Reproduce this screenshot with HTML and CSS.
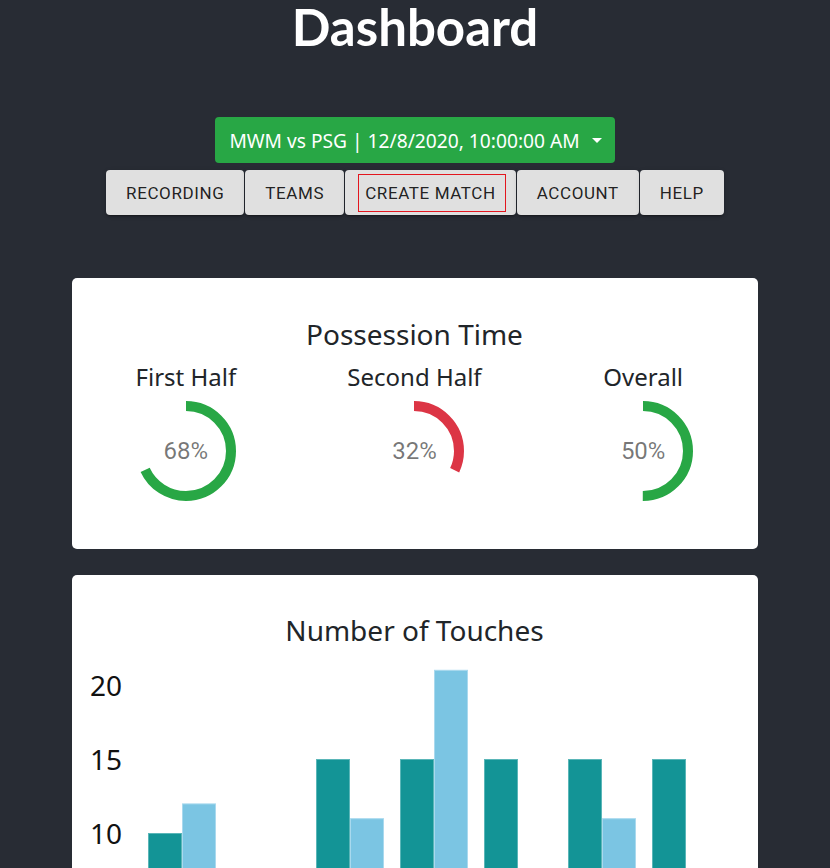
FILE: index.html
```html
<!DOCTYPE html>
<html lang="en">
<head>
<meta charset="utf-8">
<title>Dashboard</title>
<link rel="stylesheet" href="styles.css">
</head>
<body>
<div class="app">
  <h1 class="title">Dashboard</h1>

  <div class="match-select">
    <button class="match-btn"><span class="match-text">MWM vs PSG | 12/8/2020, 10:00:00 AM</span><span class="caret"></span></button>
  </div>

  <nav class="nav">
    <button class="nav-btn">RECORDING</button>
    <button class="nav-btn">TEAMS</button>
    <button class="nav-btn nav-btn-focus"><span class="focus-ring">CREATE MATCH</span></button>
    <button class="nav-btn">ACCOUNT</button>
    <button class="nav-btn">HELP</button>
  </nav>

  <section class="card card-possession">
    <h2 class="card-title">Possession Time</h2>
    <div class="gauges">
      <div class="gauge">
        <h3 class="gauge-label">First Half</h3>
        <div class="ring">
          <svg class="ring-svg" width="100" height="100" viewBox="0 0 100 100">
            <circle class="ring-arc ring-green" cx="50" cy="50" r="45" stroke-dasharray="192.26 400"/>
          </svg>
          <span class="ring-pct">68%</span>
        </div>
      </div>
      <div class="gauge">
        <h3 class="gauge-label">Second Half</h3>
        <div class="ring">
          <svg class="ring-svg" width="100" height="100" viewBox="0 0 100 100">
            <circle class="ring-arc ring-red" cx="50" cy="50" r="45" stroke-dasharray="90.48 400"/>
          </svg>
          <span class="ring-pct">32%</span>
        </div>
      </div>
      <div class="gauge">
        <h3 class="gauge-label">Overall</h3>
        <div class="ring">
          <svg class="ring-svg" width="100" height="100" viewBox="0 0 100 100">
            <circle class="ring-arc ring-green" cx="50" cy="50" r="45" stroke-dasharray="141.37 400"/>
          </svg>
          <span class="ring-pct">50%</span>
        </div>
      </div>
    </div>
  </section>

  <section class="card card-touches">
    <h2 class="card-title">Number of Touches</h2>
    <svg class="chart" width="686" height="380" viewBox="0 0 686 380">
      <g class="axis-labels">
        <text x="50" y="38">20</text>
        <text x="50" y="112">15</text>
        <text x="50" y="186">10</text>
        <text x="50" y="260">5</text>
        <text x="50" y="334">0</text>
      </g>
      <g class="bars">
        <rect class="bar-a" x="76.5" y="186.5" width="33" height="147.5"/>
        <rect class="bar-b" x="110.5" y="156.9" width="33" height="177.1"/>

        <rect class="bar-a" x="160.5" y="245.3" width="33" height="88.7"/>
        <rect class="bar-b" x="194.5" y="274.9" width="33" height="59.1"/>

        <rect class="bar-a" x="244.5" y="112.5" width="33" height="221.5"/>
        <rect class="bar-b" x="278.5" y="171.7" width="33" height="162.3"/>

        <rect class="bar-a" x="328.5" y="112.5" width="33" height="221.5"/>
        <rect class="bar-b" x="362.5" y="23.3" width="33" height="310.7"/>

        <rect class="bar-a" x="412.5" y="112.5" width="33" height="221.5"/>
        <rect class="bar-b" x="446.5" y="245.3" width="33" height="88.7"/>

        <rect class="bar-a" x="496.5" y="112.5" width="33" height="221.5"/>
        <rect class="bar-b" x="530.5" y="171.7" width="33" height="162.3"/>

        <rect class="bar-a" x="580.5" y="112.5" width="33" height="221.5"/>
        <rect class="bar-b" x="614.5" y="245.3" width="33" height="88.7"/>
      </g>
    </svg>
  </section>
</div>
</body>
</html>
```

FILE: styles.css
```css
* {
  box-sizing: border-box;
}

html, body {
  margin: 0;
  padding: 0;
}

body {
  background: #282c34;
  font-family: "Noto Sans", "Open Sans", sans-serif;
  color: #212529;
}

.app {
  display: flex;
  flex-direction: column;
  align-items: center;
  padding-bottom: 40px;
}

.title {
  margin: 0;
  font-family: Lato, "Noto Sans", sans-serif;
  font-weight: 700;
  font-size: 51px;
  line-height: 54px;
  color: #ffffff;
  text-align: center;
}

.match-select {
  margin-top: 63px;
}

.match-btn {
  display: flex;
  align-items: center;
  justify-content: center;
  width: 400px;
  height: 46px;
  padding: 0 14px 0 15px;
  border: none;
  border-radius: 4px;
  background: #28a745;
  color: #ffffff;
  font-family: "Noto Sans", sans-serif;
  font-size: 19.2px;
  white-space: nowrap;
  cursor: pointer;
}

.caret {
  display: inline-block;
  flex: none;
  margin-left: 12px;
  width: 0;
  height: 0;
  border-top: 5px solid #ffffff;
  border-left: 5px solid transparent;
  border-right: 5px solid transparent;
}

.nav {
  display: flex;
  gap: 1px;
  margin-top: 7px;
}

.nav-btn {
  display: flex;
  align-items: center;
  justify-content: center;
  height: 45px;
  padding: 0 20px;
  border: none;
  border-radius: 4px;
  background: #e0e0e0;
  color: rgba(0, 0, 0, 0.87);
  font-family: Roboto, sans-serif;
  font-size: 17px;
  letter-spacing: 0.6px;
  white-space: nowrap;
  box-shadow: 0 3px 1px -2px rgba(0, 0, 0, 0.2), 0 2px 2px 0 rgba(0, 0, 0, 0.14), 0 1px 5px 0 rgba(0, 0, 0, 0.12);
  cursor: pointer;
}

.nav-btn-focus {
  padding: 0 10px 0 13px;
}

.focus-ring {
  display: flex;
  align-items: center;
  height: 38px;
  padding: 0 9px 0 6px;
  border: 1px solid #e3161e;
  margin-top: 1px;
}

.card {
  width: 686px;
  margin-right: 1px;
  background: #ffffff;
  border-radius: 5px;
}

.card-possession {
  margin-top: 63px;
  padding: 39px 0 48px;
}

.card-touches {
  margin-top: 26px;
  padding: 38px 0 0;
}

.card-title {
  margin: 0;
  font-size: 28px;
  line-height: 34px;
  font-weight: 400;
  text-align: center;
  color: #212529;
}

.gauges {
  display: grid;
  grid-template-columns: repeat(3, 1fr);
  margin-top: 11px;
}

.gauge {
  display: flex;
  flex-direction: column;
  align-items: center;
}

.gauge-label {
  margin: 0;
  font-size: 24px;
  line-height: 30px;
  font-weight: 400;
  color: #212529;
}

.ring {
  display: grid;
  margin-top: 9px;
  width: 100px;
  height: 100px;
}

.ring-svg,
.ring-pct {
  grid-area: 1 / 1;
}

.ring-svg {
  transform: rotate(-90deg);
}

.ring-arc {
  fill: none;
  stroke-width: 10;
}

.ring-green {
  stroke: #28a745;
}

.ring-red {
  stroke: #dc3545;
}

.ring-pct {
  display: flex;
  align-items: center;
  justify-content: center;
  font-family: Roboto, sans-serif;
  font-size: 24px;
  color: rgba(0, 0, 0, 0.54);
}

.chart {
  display: block;
}

.axis-labels text {
  font-family: "Noto Sans", sans-serif;
  font-size: 28px;
  fill: #111111;
  text-anchor: end;
  dominant-baseline: central;
}

.bar-a {
  fill: #139496;
  stroke: #5ab6b8;
  stroke-width: 1;
}

.bar-b {
  fill: #7bc5e3;
  stroke: #a9d9ee;
  stroke-width: 1;
}
```
